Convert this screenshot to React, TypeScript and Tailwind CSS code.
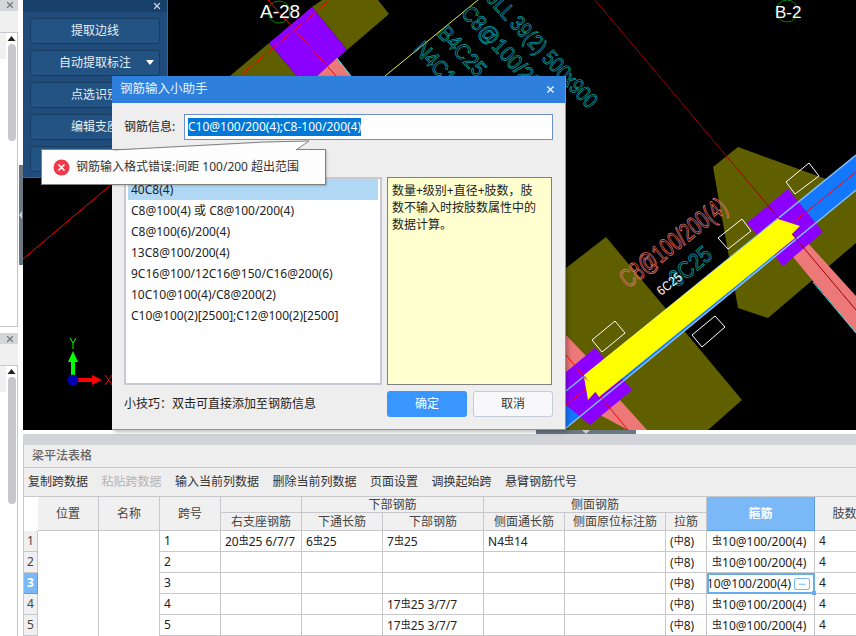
import { X } from 'lucide-react';

const toolItems = [
  { label: '复制跨数据' },
  { label: '粘贴跨数据', disabled: true },
  { label: '输入当前列数据' },
  { label: '删除当前列数据' },
  { label: '页面设置' },
  { label: '调换起始跨' },
  { label: '悬臂钢筋代号' },
];

const examples = [
  '40C8(4)',
  'C8@100(4) 或 C8@100/200(4)',
  'C8@100(6)/200(4)',
  '13C8@100/200(4)',
  '9C16@100/12C16@150/C16@200(6)',
  '10C10@100(4)/C8@200(2)',
  'C10@100(2)[2500];C12@100(2)[2500]',
];

const rows = [
  { span: '1', support: '20虫25 6/7/7', through: '6虫25', bottom: '7虫25', side: 'N4虫14' },
  { span: '2', support: '', through: '', bottom: '', side: '' },
  { span: '3', support: '', through: '', bottom: '', side: '', active: true },
  { span: '4', support: '', through: '', bottom: '17虫25 3/7/7', side: '' },
  { span: '5', support: '', through: '', bottom: '17虫25 3/7/7', side: '' },
];

const colWidths = [14, 61, 61, 61, 81, 81, 101, 81, 101, 41, 108, 60];

// grade symbols sit a little higher and smaller than the digits
const Steel = ({ text }: { text: string }) => (
  <>
    {text.split(/(虫|中)/).map((part, i) =>
      part === '虫' || part === '中' ? (
        <span key={i} className="align-[2px] text-[10px]">
          {part}
        </span>
      ) : (
        <span key={i}>{part}</span>
      ),
    )}
  </>
);

const CadCanvas = () => (
  <svg className="block h-[430px] w-[833px]" viewBox="23 0 833 430">
    <rect x="23" y="0" width="833" height="430" fill="#000" />

    <polygon points="230,76 269,43 297,76" fill="#5f5f00" />
    <polygon points="322,0 378,0 389,14 347,50 312,7" fill="#5f5f00" />
    <polygon points="269,43 312,7 347,50 317,76 297,76" fill="#8c00ff" />
    <polygon points="337,58 351,76 317,76" fill="#ec7878" />
    <line x1="337" y1="58" x2="351" y2="76" stroke="#40e8f0" />
    <line x1="330" y1="0" x2="23" y2="259" stroke="#ff0000" />
    <line x1="268" y1="0" x2="337" y2="77" stroke="#ff0000" />

    <circle cx="279" cy="12" r="11" fill="none" stroke="#008000" />
    <text x="260" y="18" fill="#fff" fontSize="19" fontFamily="Liberation Sans">
      A-28
    </text>
    <circle cx="787" cy="11" r="11" fill="none" stroke="#008000" />
    <text x="775" y="18" fill="#fff" fontSize="17" fontFamily="Liberation Sans">
      B-2
    </text>

    <line x1="478" y1="0" x2="385" y2="76" stroke="#e8e840" />
    <g fill="none" stroke="#00a0a8" strokeWidth="0.8" fontFamily="Liberation Sans" fontSize="22">
      <text transform="translate(486,0) rotate(47)" textLength="150" lengthAdjust="spacingAndGlyphs">
        JLL 39(2) 500x900
      </text>
      <text transform="translate(460,14) rotate(47)" textLength="140" lengthAdjust="spacingAndGlyphs">
        C8@100/200(4)
      </text>
      <text transform="translate(436,34) rotate(47)" textLength="60" lengthAdjust="spacingAndGlyphs">
        B4C25
      </text>
      <text transform="translate(413,50) rotate(47)" textLength="60" lengthAdjust="spacingAndGlyphs">
        N4C14
      </text>
    </g>

    <polygon points="713,167 738,147 856,190 856,243 768,318 738,308" fill="#5f5f00" />
    <polygon points="566,268 606,237 742,400 708,430 566,430" fill="#5f5f00" />

    <polygon points="793,257 807,242 856,296 856,333" fill="#ec7878" />
    <line x1="813" y1="282" x2="856" y2="333" stroke="#40e8f0" />
    <polygon points="566,335 590,360 566,385" fill="#ec7878" />
    <polygon points="600,415 620,400 647,430 628,430" fill="#ec7878" />

    <polygon points="566,391 856,155 856,190 566,428" fill="#1478ff" />
    <polygon points="747,223 788,189 823,232 783,266" fill="#8c00ff" />
    <polygon points="566,372 595,348 632,390 590,425 566,405" fill="#8c00ff" />

    <line x1="566" y1="391" x2="856" y2="155" stroke="#7fbfff" strokeWidth="1.5" />
    <line x1="566" y1="428" x2="856" y2="190" stroke="#7fbfff" strokeWidth="1.5" />
    <line x1="856" y1="172" x2="566" y2="405" stroke="#ff0000" />
    <line x1="566" y1="355" x2="628" y2="430" stroke="#ff0000" />
    <line x1="595" y1="0" x2="856" y2="310" stroke="#a00000" />

    <polygon points="584,375 778,219 795,238 599,397" fill="#ffff00" />
    <polygon points="584,377 597,390 588,400" fill="#ffff00" />
    <polygon points="778,219 800,226 788,238" fill="#ffff00" />

    <g fill="none" stroke="#fff">
      <polygon points="592,340 615,321 625,333 602,352" />
      <polygon points="692,335 715,316 725,327 702,347" />
      <polygon points="718,238 742,219 751,231 728,249" />
      <polygon points="786,182 809,163 819,176 795,194" />
    </g>

    <g fontFamily="Liberation Sans">
      <text
        transform="translate(628,289) rotate(-38)"
        fontSize="26"
        fill="none"
        stroke="#ec7878"
        strokeWidth="0.8"
        textLength="128"
        lengthAdjust="spacingAndGlyphs"
      >
        C8@100/200(4)
      </text>
      <text
        transform="translate(677,288) rotate(-40)"
        fontSize="24"
        fill="none"
        stroke="#00a0a8"
        strokeWidth="0.8"
        textLength="48"
        lengthAdjust="spacingAndGlyphs"
      >
        6C25
      </text>
      <text transform="translate(661,296) rotate(-38)" fontSize="13" fill="#fff" textLength="28" lengthAdjust="spacingAndGlyphs">
        6C25
      </text>
    </g>

    <rect x="71" y="361" width="4" height="19" fill="#00ff00" />
    <polygon points="73,351 78,362 68,362" fill="#00ff00" />
    <rect x="73" y="378" width="20" height="4" fill="#ff0000" />
    <polygon points="102,380 92,375 92,385" fill="#ff0000" />
    <circle cx="73" cy="380" r="5.5" fill="#0000b0" />
    <path d="M70 338 L73 343 L76 338 M73 343 V349" fill="none" stroke="#00ff00" />
    <path d="M105 375 L112 385 M112 375 L105 385" fill="none" stroke="#ff0000" />
  </svg>
);

const ScrollColumn = ({ thumb, track }: { thumb: string; track: string }) => (
  <div className={`flex ${track}`}>
    <div className="h-[26px] w-[6px] bg-[#f0f0f0]" />
    <div className="flex w-[12px] flex-col items-center border-r border-[#c4c4c8]">
      <svg width="9" height="9" viewBox="0 0 9 9" className="mt-[1px] shrink-0">
        <polygon points="4.5,2 8.5,7 0.5,7" fill="#222" />
      </svg>
      <div className={`mt-[1px] w-[8px] rounded-[4px] bg-[#c8c8cc] ${thumb}`} />
    </div>
  </div>
);

const PanelHead = () => (
  <>
    <div className="flex h-[11px] items-center justify-end bg-[#d4d5da] pr-[3px] text-[#777]">
      <X size={10} strokeWidth={3} />
    </div>
    <div className="h-[22px] border-b border-[#c8c8cc] bg-[#f0f0f0]" />
  </>
);

const LeftRail = () => (
  <div className="flex h-[636px] w-[23px] shrink-0 bg-white">
    <div className="flex w-[18px] flex-col">
      <div className="flex h-[327px] flex-col border-b border-[#c4c4c8]">
        <PanelHead />
        <ScrollColumn track="h-[294px]" thumb="h-[97px]" />
        <svg width="12" height="0" />
      </div>
      <div className="h-[6px]" />
      <div className="flex flex-col">
        <PanelHead />
        <ScrollColumn track="h-[270px]" thumb="h-[127px]" />
      </div>
    </div>
    <div className="flex w-[5px] flex-col">
      <div className="h-[165px]" />
      <div className="ml-[1px] flex h-[100px] items-center bg-[#6b7782]">
        <svg width="3" height="8" viewBox="0 0 3 8">
          <polygon points="3,0 3,8 0,4" fill="#c8ccd0" />
        </svg>
      </div>
    </div>
  </div>
);

const ToolPanel = () => (
  <div className="absolute left-0 top-0 h-[178px] w-[145px] border-r border-b border-[#2e6aa0] bg-[#1f4c7b]">
    <div className="flex h-[12px] items-center justify-end bg-[#17406b] pr-[5px] text-[#c4d4e4]">
      <X size={10} strokeWidth={3} />
    </div>
    <div className="flex flex-col gap-[6px] px-[7px] pt-[6px]">
      {['提取边线', '自动提取标注', '点选识别', '编辑支座', '校核'].map((label, i) => (
        <div
          key={label}
          className="relative flex h-[26px] items-center justify-center rounded-[3px] border border-[#173c62] bg-[#225382] text-[12px] text-[#e6eef6]"
        >
          {label}
          {i === 1 && (
            <svg width="8" height="5" viewBox="0 0 8 5" className="absolute right-[5px] top-[9px]">
              <polygon points="0,0 8,0 4,5" fill="#fff" />
            </svg>
          )}
        </div>
      ))}
    </div>
  </div>
);

const headCell = 'border-r border-b border-[#c8c8cc] bg-[#f0f0f0] text-center font-normal text-[#444]';
const bodyCell = 'h-[21px] overflow-hidden whitespace-nowrap border-r border-b border-[#c8c8cc] bg-white pl-[4px] text-left text-[#222]';

const BeamTable = () => (
  <table className="w-[851px] table-fixed border-separate border-spacing-0 bg-white text-[12px] leading-none">
    <colgroup>
      {colWidths.map((w, i) => (
        <col key={i} style={{ width: w }} />
      ))}
    </colgroup>
    <thead>
      <tr className="h-[16px]">
        <th rowSpan={2} className="bg-white" />
        <th rowSpan={2} className={headCell}>位置</th>
        <th rowSpan={2} className={headCell}>名称</th>
        <th rowSpan={2} className={headCell}>跨号</th>
        <th className={headCell} />
        <th colSpan={2 + 0 + 0} className={headCell}>下部钢筋</th>
        <th colSpan={3} className={headCell}>侧面钢筋</th>
        <th rowSpan={2} className="border-r border-b border-[#5b9be0] bg-[#7ab8f8] text-center font-bold text-white">
          箍筋
        </th>
        <th rowSpan={2} className={headCell}>肢数</th>
      </tr>
      <tr className="h-[18px]">
        <th className={headCell}>右支座钢筋</th>
        <th className={headCell}>下通长筋</th>
        <th className={headCell}>下部钢筋</th>
        <th className={headCell}>侧面通长筋</th>
        <th className={headCell}>侧面原位标注筋</th>
        <th className={headCell}>拉筋</th>
      </tr>
    </thead>
    <tbody>
      {rows.map((row, i) => (
        <tr key={row.span}>
          <td
            className={
              row.active
                ? 'h-[21px] border-r border-b border-[#5b9be0] bg-[#7ab8f8] text-center font-bold text-white'
                : 'h-[21px] border-r border-b border-[#c8c8cc] bg-[#f0f0f0] text-center text-[#444]'
            }
          >
            {row.span}
          </td>
          {i === 0 && <td rowSpan={5} className="border-r border-[#c8c8cc] bg-white" />}
          {i === 0 && <td rowSpan={5} className="border-r border-[#c8c8cc] bg-white" />}
          <td className={bodyCell}>{row.span}</td>
          <td className={bodyCell}><Steel text={row.support} /></td>
          <td className={bodyCell}><Steel text={row.through} /></td>
          <td className={bodyCell}><Steel text={row.bottom} /></td>
          <td className={bodyCell}><Steel text={row.side} /></td>
          <td className={bodyCell} />
          <td className={bodyCell}><Steel text="(中8)" /></td>
          {row.active ? (
            <td className="relative h-[21px] border-2 border-[#68aeee] bg-white p-0">
              <div className="flex h-full items-center justify-end gap-[3px] overflow-hidden pr-[3px] text-[#222]">
                <span className="shrink-0 whitespace-nowrap">
                  <Steel text="虫10@100/200(4)" />
                </span>
                <span className="flex h-[12px] w-[16px] shrink-0 items-center justify-center rounded-[2px] border border-[#7ab8f8] text-[8px] font-bold text-[#5b9be0]">
                  ···
                </span>
              </div>
              <div className="absolute -bottom-[3px] -right-[3px] h-[4px] w-[4px] bg-[#68aeee]" />
            </td>
          ) : (
            <td className={`${bodyCell} !pl-[5px]`}><Steel text="虫10@100/200(4)" /></td>
          )}
          <td className={bodyCell}>4</td>
        </tr>
      ))}
    </tbody>
  </table>
);

const BottomPanel = () => (
  <div className="flex min-h-0 flex-1 flex-col overflow-hidden border-l border-[#c4c4c8] bg-[#eeeeee]">
    <div className="flex h-[23px] shrink-0 items-center border-b border-[#c8c8cc] pl-[8px] text-[12px] font-medium text-[#666]">
      梁平法表格
    </div>
    <div className="flex h-[29px] shrink-0 items-center gap-[13.5px] border-b border-[#c8c8cc] pl-[4px] text-[12px] text-[#333]">
      {toolItems.map((item) => (
        <span key={item.label} className={item.disabled ? 'text-[#b4b4b4]' : ''}>
          {item.label}
        </span>
      ))}
    </div>
    <BeamTable />
  </div>
);

const BarDialog = () => (
  <div className="absolute left-[112px] top-[76px] flex h-[354px] w-[454px] flex-col border-r border-b border-[#8a96a4] bg-[#eeeeee] text-[12px] text-[#222] shadow-[2px_2px_4px_rgba(0,0,0,0.25)]">
    <div className="flex h-[27px] shrink-0 items-center justify-between bg-[#2f7fdc] pl-[8px] pr-[9px] text-[#e8f1fb]">
      <span className="text-[12.5px]">钢筋输入小助手</span>
      <X size={11} strokeWidth={2.5} className="text-white" />
    </div>
    <div className="flex flex-1 flex-col px-[12px]">
      <div className="mt-[11px] flex h-[26px] items-center gap-[8px]">
        <span className="w-[52px] shrink-0">钢筋信息:</span>
        <div className="flex h-[26px] w-[370px] items-center border border-[#6d8fd0] bg-white pl-[3px]">
          <span className="whitespace-nowrap bg-[#0078d7] text-white">C10@100/200(4);C8-100/200(4)</span>
        </div>
      </div>
      <div className="mt-[37px] flex h-[208px] gap-[5px]">
        <div className="w-[258px] border-2 border-[#c8c8d0] bg-white px-[2px] pt-0">
          {examples.map((text, i) => (
            <div key={text} className={`flex h-[21px] items-center pl-[3px] ${i === 0 ? 'h-[20px] bg-[#b0d8f5]' : ''}`}>
              {text}
            </div>
          ))}
        </div>
        <div className="w-[165px] border border-[#808080] bg-[#ffffd0] px-[4px] pt-[4px] leading-[17px]">
          数量+级别+直径+肢数，肢
          <br />
          数不输入时按肢数属性中的
          <br />
          数据计算。
        </div>
      </div>
      <div className="mt-[6px] flex h-[26px] items-center">
        <span className="w-[263px] shrink-0">小技巧：双击可直接添加至钢筋信息</span>
        <div className="flex h-[26px] w-[80px] items-center justify-center rounded-[3px] bg-[#3a96ff] text-white">确定</div>
        <div className="ml-[6px] flex h-[26px] w-[80px] items-center justify-center rounded-[3px] border border-[#c4ccdc] bg-[#f8f8fa] text-[#333]">
          取消
        </div>
      </div>
    </div>
  </div>
);

const ErrorTip = () => (
  <div className="absolute left-[41px] top-[149px] flex h-[36px] w-[285px] items-center gap-[6px] border border-[#808080] bg-[#fdfdfd] pl-[11px] text-[12px] text-[#333] shadow-[1px_1px_2px_rgba(0,0,0,0.2)]">
    <svg width="17" height="17" viewBox="0 0 17 17" className="shrink-0">
      <circle cx="8.5" cy="8.5" r="8" fill="#ee3b4c" />
      <path d="M5.5 5.5 L11.5 11.5 M11.5 5.5 L5.5 11.5" stroke="#fff" strokeWidth="1.6" />
    </svg>
    <span className="whitespace-nowrap">钢筋输入格式错误:间距 100/200 超出范围</span>
    <svg width="200" height="11" viewBox="0 0 200 11" className="absolute -top-[10px] left-[72px] overflow-visible">
      <polygon points="0,10 195,1 182,10" fill="#fdfdfd" />
      <polyline points="0,10 150,2 195,1 182,10" fill="none" stroke="#808080" />
    </svg>
  </div>
);

export default function App() {
  return (
    <div className="relative flex h-[636px] w-[856px] overflow-hidden bg-white font-['Noto_Sans','Noto_Sans_CJK_SC',sans-serif]">
      <LeftRail />
      <div className="flex min-w-0 flex-1 flex-col">
        <div className="relative h-[430px] shrink-0">
          <CadCanvas />
          <ToolPanel />
        </div>
        <div className="flex h-[4px] shrink-0 justify-start bg-white">
          <div className="ml-[513px] flex h-[4px] w-[100px] justify-center bg-[#6b7782]">
            <svg width="8" height="4" viewBox="0 0 8 4">
              <polygon points="0,0 8,0 4,4" fill="#c8ccd0" />
            </svg>
          </div>
        </div>
        <div className="h-[11px] shrink-0 bg-[#d3d4d9]" />
        <BottomPanel />
      </div>
      <BarDialog />
      <ErrorTip />
    </div>
  );
}
